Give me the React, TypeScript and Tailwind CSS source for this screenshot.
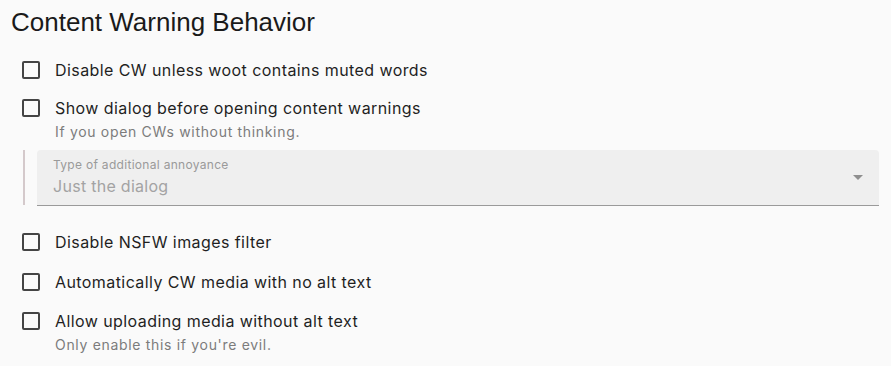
import React from "react";

function Box() {
  return <span className="w-[18px] h-[18px] border-2 border-[#444444] rounded-[2px] shrink-0 box-border" />;
}

function Row({ label, desc, mt, dmt }: { label: string; desc?: string; mt: string; dmt?: string }) {
  return (
    <div className={`flex flex-col ${mt}`}>
      <div className="flex items-center h-[20px] pl-[22px]">
        <Box />
        <span className="ml-[15px] text-[16px] text-[#1f1f1f] leading-[20px] tracking-[0.42px]">{label}</span>
      </div>
      {desc && (
        <div className={`pl-[55px] ${dmt ?? "mt-[5px]"} text-[14px] leading-[18px] text-[#7c7c7c] tracking-[0.68px]`}>{desc}</div>
      )}
    </div>
  );
}

export default function App() {
  return (
    <div className="w-[891px] h-[366px] bg-[#fafafa] overflow-hidden" style={{ fontFamily: "Inter, 'Noto Sans', sans-serif" }}>
      <h1 className="pl-[11px] pt-[6px] text-[26px] leading-[32px] text-[#1a1a1a]" style={{ fontFamily: "'Liberation Sans', Arial, sans-serif" }}>
        Content Warning Behavior
      </h1>
      <div className="flex flex-col">
        <Row mt="mt-[22px]" label="Disable CW unless woot contains muted words" />
        <Row mt="mt-[18px]" label="Show dialog before opening content warnings" desc="If you open CWs without thinking." />
        <div className="flex mt-[9px] ml-[23px] mr-[12px]">
          <div className="w-[2px] bg-[#d4c9cb] h-[55px]" />
          <div className="ml-[12px] flex-1 h-[56px] bg-[#efefef] rounded-t-[4px] border-b border-[#9a9a9a] relative pl-[16px]">
            <div className="pt-[8px] text-[12px] leading-[14px] text-[#9a9a9a] tracking-[0.3px]">Type of additional annoyance</div>
            <div className="mt-[4px] text-[16px] leading-[20px] text-[#a3a3a3] tracking-[0.28px]">Just the dialog</div>
            <svg className="absolute right-[16px] top-[25px]" width="10" height="5" viewBox="0 0 10 5">
              <path d="M0 0 L10 0 L5 5 Z" fill="#8f8f8f" />
            </svg>
          </div>
        </div>
        <Row mt="mt-[26px]" label="Disable NSFW images filter" />
        <Row mt="mt-[20px]" label="Automatically CW media with no alt text" />
        <Row mt="mt-[19px]" label="Allow uploading media without alt text" desc="Only enable this if you're evil." />
      </div>
    </div>
  );
}
